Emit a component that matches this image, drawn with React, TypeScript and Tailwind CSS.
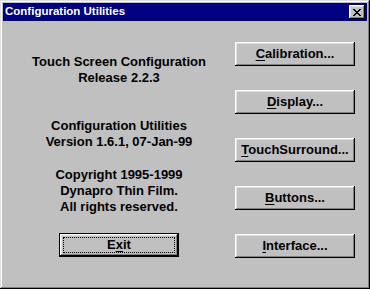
import type { ReactNode } from 'react'

const font = { fontFamily: '"Liberation Sans", Arial, sans-serif' }

const bevel =
  'shadow-[inset_-1px_-1px_0_#000000,inset_1px_1px_0_#ffffff,inset_-2px_-2px_0_#808080,inset_2px_2px_0_#dfdfdf]'

const Key = ({ children }: { children: ReactNode }) => <span className="underline underline-offset-[2px]">{children}</span>

const SideButton = ({ k, rest }: { k: string; rest: string }) => (
  <div className={`flex h-[24px] w-[120px] items-center justify-center bg-[#c0c0c0] text-[13px] font-bold text-black ${bevel}`}>
    <span>
      <Key>{k}</Key>
      {rest}
    </span>
  </div>
)

const CloseIcon = () => (
  <svg width="8" height="7" viewBox="0 0 8 7" shapeRendering="crispEdges">
    <path
      d="M0 0h2v1H0zM6 0h2v1H6zM1 1h2v1H1zM5 1h2v1H5zM2 2h4v1H2zM3 3h2v1H3zM2 4h4v1H2zM1 5h2v1H1zM5 5h2v1H5zM0 6h2v1H0zM6 6h2v1H6z"
      fill="#000"
    />
  </svg>
)

export default function App() {
  return (
    <div
      className="h-[289px] w-[370px] bg-[#c0c0c0] p-[3px] shadow-[inset_-1px_-1px_0_#000000,inset_1px_1px_0_#dfdfdf,inset_-2px_-2px_0_#808080,inset_2px_2px_0_#ffffff]"
      style={font}
    >
      <div className="flex h-[18px] items-center justify-between bg-[#000080] pl-[2px] pr-[2px]">
        <span className="text-[11.5px] font-bold leading-none text-white">Configuration Utilities</span>
        <div className={`flex h-[14px] w-[16px] items-center justify-center bg-[#c0c0c0] ${bevel}`}>
          <CloseIcon />
        </div>
      </div>

      <div className="flex">
        <div className="flex w-[232px] flex-col items-center pt-[33px] text-[13px] font-bold leading-[16px] text-black">
          <div className="text-center">
            <div>Touch Screen Configuration</div>
            <div>Release 2.2.3</div>
          </div>
          <div className="mt-[32px] text-center">
            <div>Configuration Utilities</div>
            <div>Version 1.6.1, 07-Jan-99</div>
          </div>
          <div className="mt-[17px] text-center">
            <div>Copyright 1995-1999</div>
            <div>Dynapro Thin Film.</div>
            <div>All rights reserved.</div>
          </div>
          <div className="mt-[18px] h-[24px] w-[120px] border border-black">
            <div className={`h-full w-full bg-[#c0c0c0] p-[3px] ${bevel}`}>
              <div className="flex h-full w-full items-center justify-center border border-dotted border-black">
                <span>
                  E<Key>x</Key>it
                </span>
              </div>
            </div>
          </div>
        </div>

        <div className="flex flex-col gap-[24px] pt-[21px]">
          <SideButton k="C" rest="alibration..." />
          <SideButton k="D" rest="isplay..." />
          <SideButton k="T" rest="ouchSurround..." />
          <SideButton k="B" rest="uttons..." />
          <SideButton k="I" rest="nterface..." />
        </div>
      </div>
    </div>
  )
}
